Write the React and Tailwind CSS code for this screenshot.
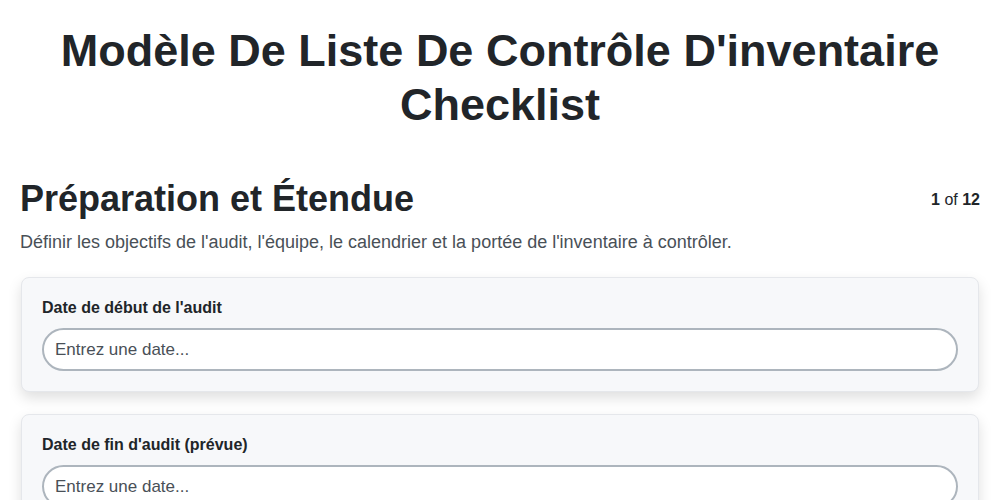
import React from "react";

const fields = [
  { label: "Date de début de l'audit", placeholder: "Entrez une date..." },
  { label: "Date de fin d'audit (prévue)", placeholder: "Entrez une date..." },
];

const App = () => {
  return (
    <div className="min-h-screen bg-white text-[#212529]" style={{ fontFamily: '"Liberation Sans", Arial, sans-serif' }}>
      <div className="px-5 pt-6">
        <h1 className="text-center text-[45px] font-bold leading-[1.2]">
          Modèle De Liste De Contrôle D'inventaire Checklist
        </h1>

        <div className="mt-[45px] flex items-center justify-between">
          <h2 className="text-[36px] font-bold leading-[1.2]">Préparation et Étendue</h2>
          <div className="pt-0.5 text-base">
            <span className="font-bold">1</span> of <span className="font-bold">12</span>
          </div>
        </div>
        <p className="mt-[9px] text-[18px] leading-[1.5] text-[#495057]">
          Définir les objectifs de l'audit, l'équipe, le calendrier et la portée de l'inventaire à contrôler.
        </p>

        <div className="mt-[21px] flex flex-col gap-[22px] px-px">
          {fields.map((f) => (
            <div key={f.label} className="rounded-lg border border-[#e5e7eb] bg-[#f7f8fa] px-5 pt-5 pb-5 shadow-[0_6px_14px_rgba(0,0,0,0.13)]">
              <label className="block text-base font-bold leading-5">{f.label}</label>
              <input
                type="text"
                placeholder={f.placeholder}
                className="mt-[10px] block h-[43px] w-full rounded-full border-2 border-[#adb5bd] bg-white px-[11px] text-[17px] text-[#212529] placeholder:text-[#495057] outline-none"
              />
            </div>
          ))}
        </div>
      </div>
    </div>
  );
};

export default App;
